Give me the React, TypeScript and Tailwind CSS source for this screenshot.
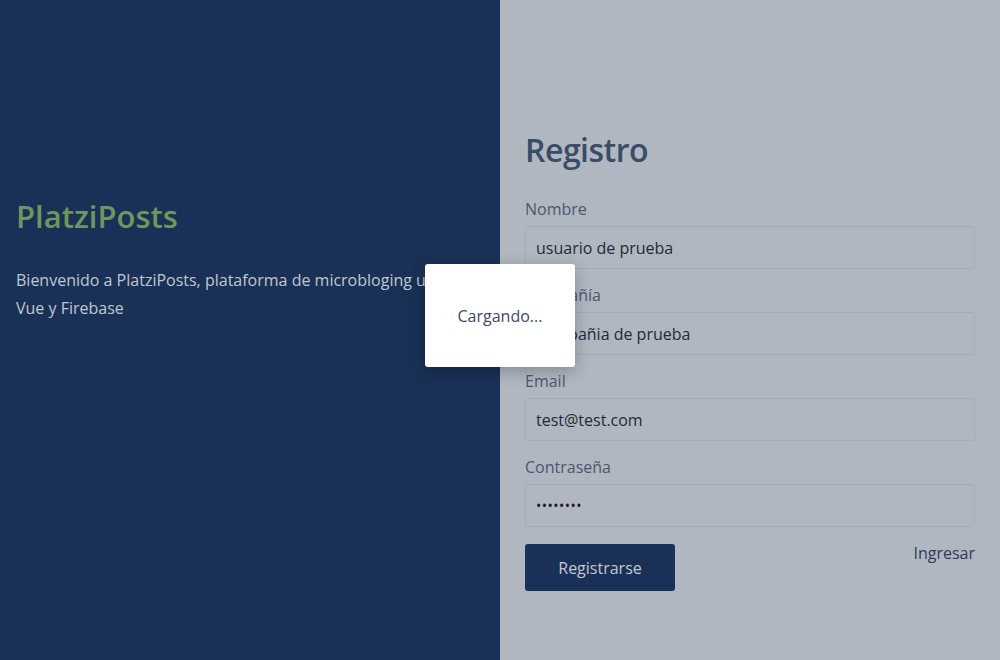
import type { ReactNode } from "react";

const FONT = { fontFamily: '"Open Sans", "Noto Sans", sans-serif' };

function Field({ label, children }: { label: string; children: ReactNode }) {
  return (
    <div className="mb-[14px]">
      <label className="block text-[16px] leading-[24px] text-[#4a5870]">{label}</label>
      <div className="mt-[5px] flex h-[43px] items-center rounded-[3px] border border-[#a4acb7] bg-[#b0b7c0] px-[10px] text-[16px] text-[#1f2a3a]">
        {children}
      </div>
    </div>
  );
}

export default function App() {
  return (
    <div style={FONT} className="relative flex h-[660px] w-[1000px] overflow-hidden">
      <section className="flex w-1/2 flex-col bg-[#1a3157] px-4 pt-[195px]">
        <h1 className="text-[31px] font-semibold leading-[42px] text-[#6e9661]">
          PlatziPosts
        </h1>
        <p className="mt-[29px] text-[16px] leading-[28px] text-[#c1c7d0]">
          Bienvenido a PlatziPosts, plataforma de microbloging usando Vue y Firebase
        </p>
      </section>

      <section className="w-1/2 bg-[#b0b7c0] px-[25px] pt-[127px]">
        <h2 className="mb-[24px] text-[32px] font-semibold leading-[46px] tracking-[-0.5px] text-[#3b4c66]">
          Registro
        </h2>
        <Field label="Nombre">usuario de prueba</Field>
        <Field label="Compañía">compañia de prueba</Field>
        <Field label="Email">test@test.com</Field>
        <Field label="Contraseña">
          <span className="text-[14px] tracking-[0.5px] text-[#141c2a]">••••••••</span>
        </Field>
        <div className="mt-[17px] flex items-start justify-between">
          <button className="h-[47px] w-[150px] rounded-[3px] bg-[#1a3157] text-[16px] text-[#c3c9d2]">
            Registrarse
          </button>
          <a className="mt-[-3px] text-[16px] leading-[24px] text-[#2c3c5c]">Ingresar</a>
        </div>
      </section>

      <div className="absolute left-[425px] top-[264px] flex h-[103px] w-[150px] items-center justify-center rounded-[3px] bg-white shadow-[0_4px_16px_rgba(0,0,0,0.25)]">
        <span className="text-[16px] text-[#3b4a6b]">Cargando...</span>
      </div>
    </div>
  );
}
